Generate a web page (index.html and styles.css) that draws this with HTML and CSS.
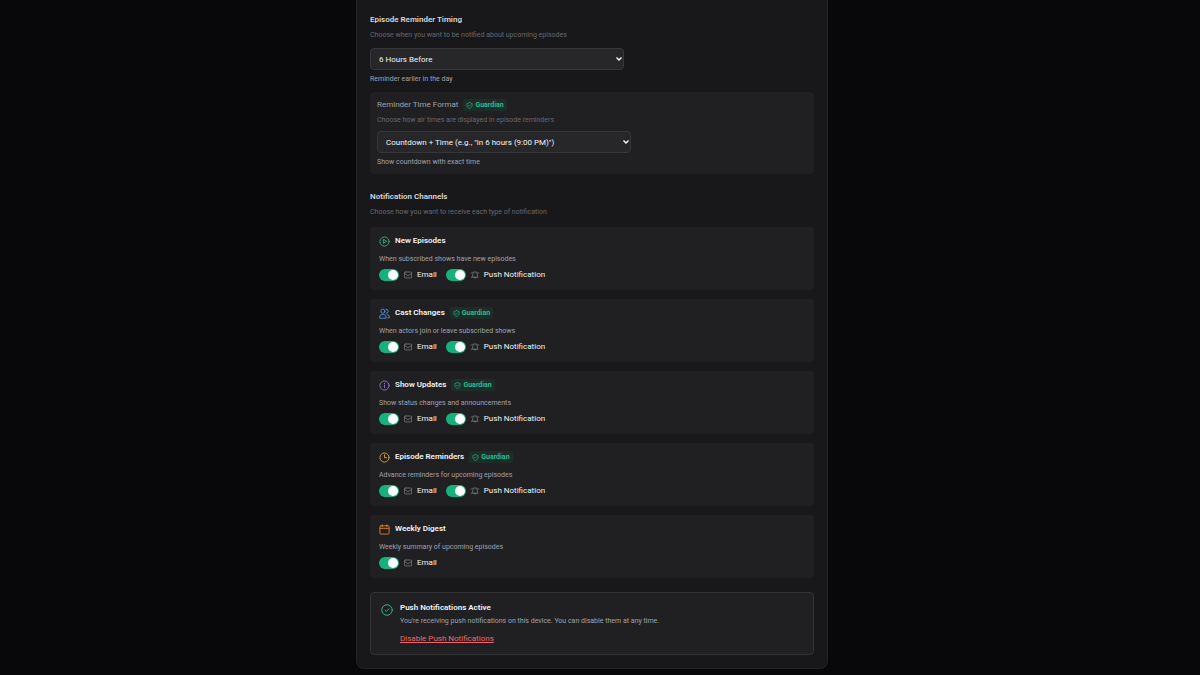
FILE: index.html
```html
<!DOCTYPE html>
<html lang="en">

<head>
    <meta charset="UTF-8">
    <meta name="viewport" content="width=device-width, initial-scale=1.0">
    <title>Notification Settings</title>
    <link rel="stylesheet" href="styles.css">
</head>

<body>
    <!-- Shared icons -->
    <svg class="icon-defs" aria-hidden="true">
        <symbol id="icon-shield" viewBox="0 0 24 24">
            <path d="M12 2c2.600 2 5.600 3 9 3v6c0 5.500-3.600 9-9 11-5.400-2-9-5.500-9-11V5c3.400 0 6.400-1 9-3z" />
            <path d="M8.500 12l2.500 2.500 4.500-5" />
        </symbol>
        <symbol id="icon-mail" viewBox="0 0 24 24">
            <rect x="1" y="3" width="22" height="18" rx="3" />
            <path d="M1.500 8l9 5.500a3 3 0 0 0 3 0l9-5.500" />
        </symbol>
        <symbol id="icon-bell" viewBox="0 0 24 24">
            <path d="M2.500 18.500h19c-1.500-1.500-2.500-3.500-2.500-6V9.500a7 7 0 0 0-14 0v3c0 2.500-1 4.500-2.500 6z" />
            <path d="M9 18.500a3 3 0 0 0 6 0M2 6.500l1.500-3M22 6.500l-1.500-3" />
        </symbol>
    </svg>

    <main class="settings-panel">
        <section class="settings-section">
            <h2 class="section-title"><label for="reminderTiming">Episode Reminder Timing</label></h2>
            <p class="section-hint">Choose when you want to be notified about upcoming episodes</p>
            <select id="reminderTiming" class="select">
                <option>At Air Time</option>
                <option>1 Hour Before</option>
                <option selected>6 Hours Before</option>
                <option>24 Hours Before</option>
            </select>
            <p class="select-help">Reminder earlier in the day</p>

            <div class="format-box">
                <div class="format-header">
                    <label for="timeFormat">Reminder Time Format</label>
                    <span class="badge"><svg class="badge-icon"><use href="#icon-shield" /></svg>Guardian</span>
                </div>
                <p class="section-hint">Choose how air times are displayed in episode reminders</p>
                <select id="timeFormat" class="select">
                    <option selected>Countdown + Time (e.g., "in 6 hours (9:00 PM)")</option>
                    <option>Countdown Only</option>
                    <option>Time Only</option>
                </select>
                <p class="select-help">Show countdown with exact time</p>
            </div>
        </section>

        <section class="settings-section">
            <h2 class="section-title">Notification Channels</h2>
            <p class="section-hint">Choose how you want to receive each type of notification</p>

            <div class="channel-list">
                <div class="channel-card">
                    <div class="channel-header">
                        <svg class="channel-icon green" viewBox="0 0 24 24">
                            <circle cx="12" cy="12" r="10" />
                            <path d="M9.500 8v8l6.500-4z" />
                        </svg>
                        <h3>New Episodes</h3>
                    </div>
                    <p class="channel-text">When subscribed shows have new episodes</p>
                    <div class="channel-options">
                        <label class="option"><input type="checkbox" class="toggle" checked><svg class="option-icon"><use href="#icon-mail" /></svg>Email</label>
                        <label class="option"><input type="checkbox" class="toggle" checked><svg class="option-icon"><use href="#icon-bell" /></svg>Push Notification</label>
                    </div>
                </div>

                <div class="channel-card">
                    <div class="channel-header">
                        <svg class="channel-icon blue" viewBox="0 0 24 24">
                            <circle cx="8.500" cy="7" r="4.500" />
                            <path d="M1.500 21.500v-2a5 5 0 0 1 5-5h4a5 5 0 0 1 5 5v2z" />
                            <path d="M15.500 2.500a4.500 4.500 0 0 1 0 9M18 14.500a5 5 0 0 1 4.500 5v2H19" />
                        </svg>
                        <h3>Cast Changes</h3>
                        <span class="badge"><svg class="badge-icon"><use href="#icon-shield" /></svg>Guardian</span>
                    </div>
                    <p class="channel-text">When actors join or leave subscribed shows</p>
                    <div class="channel-options">
                        <label class="option"><input type="checkbox" class="toggle" checked><svg class="option-icon"><use href="#icon-mail" /></svg>Email</label>
                        <label class="option"><input type="checkbox" class="toggle" checked><svg class="option-icon"><use href="#icon-bell" /></svg>Push Notification</label>
                    </div>
                </div>

                <div class="channel-card">
                    <div class="channel-header">
                        <svg class="channel-icon purple" viewBox="0 0 24 24">
                            <circle cx="12" cy="12" r="10" />
                            <path d="M12 11v6M12 7v1" />
                        </svg>
                        <h3>Show Updates</h3>
                        <span class="badge"><svg class="badge-icon"><use href="#icon-shield" /></svg>Guardian</span>
                    </div>
                    <p class="channel-text">Show status changes and announcements</p>
                    <div class="channel-options">
                        <label class="option"><input type="checkbox" class="toggle" checked><svg class="option-icon"><use href="#icon-mail" /></svg>Email</label>
                        <label class="option"><input type="checkbox" class="toggle" checked><svg class="option-icon"><use href="#icon-bell" /></svg>Push Notification</label>
                    </div>
                </div>

                <div class="channel-card">
                    <div class="channel-header">
                        <svg class="channel-icon yellow" viewBox="0 0 24 24">
                            <circle cx="12" cy="12" r="10" />
                            <path d="M12 6v6.500h5" />
                        </svg>
                        <h3>Episode Reminders</h3>
                        <span class="badge"><svg class="badge-icon"><use href="#icon-shield" /></svg>Guardian</span>
                    </div>
                    <p class="channel-text">Advance reminders for upcoming episodes</p>
                    <div class="channel-options">
                        <label class="option"><input type="checkbox" class="toggle" checked><svg class="option-icon"><use href="#icon-mail" /></svg>Email</label>
                        <label class="option"><input type="checkbox" class="toggle" checked><svg class="option-icon"><use href="#icon-bell" /></svg>Push Notification</label>
                    </div>
                </div>

                <div class="channel-card">
                    <div class="channel-header">
                        <svg class="channel-icon orange" viewBox="0 0 24 24">
                            <rect x="2" y="4" width="20" height="18" rx="2" />
                            <path d="M2 9.500h20M7 1.500V6M17 1.500V6" />
                        </svg>
                        <h3>Weekly Digest</h3>
                    </div>
                    <p class="channel-text">Weekly summary of upcoming episodes</p>
                    <div class="channel-options">
                        <label class="option"><input type="checkbox" class="toggle" checked><svg class="option-icon"><use href="#icon-mail" /></svg>Email</label>
                    </div>
                </div>
            </div>
        </section>

        <section class="push-card">
            <svg class="push-icon" viewBox="0 0 24 24">
                <circle cx="12" cy="12" r="10.500" />
                <path d="M8 12.500l2.700 2.500L16 9.500" />
            </svg>
            <div>
                <h3>Push Notifications Active</h3>
                <p class="push-text">You're receiving push notifications on this device. You can disable them at any time.</p>
                <button type="button" class="disable-btn">Disable Push Notifications</button>
            </div>
        </section>
    </main>
</body>

</html>
```
FILE: styles.css
```css
* {
    margin: 0;
    padding: 0;
    box-sizing: border-box;
}

body {
    font-family: 'Segoe UI', Roboto, 'Noto Sans', sans-serif;
    font-size: 8px;
    line-height: 12px;
    color: #f4f4f5;
    background: #08080a;
    padding: 0 16px 6px 0;
}

svg {
    fill: none;
    stroke: currentColor;
    stroke-width: 2;
    stroke-linecap: round;
    stroke-linejoin: round;
    flex-shrink: 0;
}

.icon-defs {
    display: none;
}

.settings-panel {
    max-width: 472px;
    margin: 0 auto;
    padding: 14px 13px 13px;
    background: #18181a;
    border: 1px solid #242427;
    border-top: none;
    border-radius: 0 0 8px 8px;
}

.settings-section + .settings-section {
    margin-top: 17px;
}

.section-title {
    font-size: 8px;
    font-weight: 600;
    color: #d8d8dc;
    margin-bottom: 4px;
}

.section-hint {
    font-size: 7px;
    line-height: 10px;
    color: #67676e;
}

.select {
    display: block;
    appearance: none;
    width: 100%;
    max-width: 254px;
    height: 22px;
    margin: 8px 0 4px;
    padding: 0 16px 0 8px;
    font-family: inherit;
    font-size: 8px;
    color: #f4f4f5;
    background: #27272a url("data:image/svg+xml,%3Csvg xmlns='http://www.w3.org/2000/svg' viewBox='0 0 6 4' fill='none' stroke='white' stroke-width='1.4'%3E%3Cpath d='M.5 .5L3 3L5.500 .5'/%3E%3C/svg%3E") no-repeat right 1px center / 6px 4px;
    border: 1px solid #37373b;
    border-radius: 4px;
}

.select-help {
    font-size: 7px;
    line-height: 10px;
    color: #a1a1aa;
}

.format-box {
    margin-top: 8px;
    padding: 7px;
    background: #202022;
    border-radius: 4px;
}

.format-box .select {
    margin-top: 6px;
}

.format-header {
    display: flex;
    align-items: center;
    gap: 5px;
    margin-bottom: 4px;
    color: #a1a1aa;
}

.badge {
    display: inline-flex;
    align-items: center;
    gap: 2px;
    padding: 0 3px;
    font-size: 7px;
    font-weight: 600;
    color: #2fc48d;
    background: #1d2d28;
    border-radius: 2px;
}

.badge-icon {
    width: 7px;
    height: 7px;
}

.channel-list {
    display: flex;
    flex-direction: column;
    gap: 9px;
    margin-top: 10px;
}

.channel-card {
    padding: 8px 9px 9px;
    background: #202022;
    border-radius: 4px;
}

.channel-header {
    display: flex;
    align-items: center;
    gap: 5px;
    margin-bottom: 7px;
}

.channel-header h3,
.push-card h3 {
    font-size: 8px;
    font-weight: 600;
}

.channel-icon {
    width: 11px;
    height: 11px;
}

.green {
    color: #34b380;
}

.blue {
    color: #5090d8;
}

.purple {
    color: #9670d0;
}

.yellow {
    color: #dba52a;
}

.orange {
    color: #d78034;
}

.channel-text,
.push-text {
    font-size: 7px;
    line-height: 10px;
    color: #a1a1aa;
}

.channel-options {
    display: flex;
    gap: 9px;
    margin-top: 5px;
}

.option {
    display: flex;
    align-items: center;
    gap: 5px;
    cursor: pointer;
}

.option-icon {
    width: 8px;
    height: 8px;
    color: #8b8b93;
}

.toggle {
    appearance: none;
    display: flex;
    align-items: center;
    justify-content: flex-end;
    width: 20px;
    height: 12px;
    padding: 1px;
    background: #3f3f46;
    border-radius: 6px;
    cursor: pointer;
}

.toggle::before {
    content: "";
    width: 10px;
    height: 10px;
    background: #fff;
    border-radius: 50%;
}

.toggle:checked {
    background: #16b17c;
}

.toggle:not(:checked) {
    justify-content: flex-start;
}

.push-card {
    display: flex;
    align-items: flex-start;
    gap: 7px;
    margin-top: 14px;
    padding: 9px 10px;
    background: #202022;
    border: 1px solid #333336;
    border-radius: 4px;
}

.push-icon {
    width: 12px;
    height: 12px;
    margin-top: 2px;
    color: #34b380;
}

.push-text {
    margin-top: 2px;
}

.disable-btn {
    display: block;
    margin-top: 7px;
    font-family: inherit;
    font-size: 8px;
    line-height: 12px;
    color: #f0686c;
    background: none;
    border: none;
    text-decoration: underline;
    cursor: pointer;
}
```
